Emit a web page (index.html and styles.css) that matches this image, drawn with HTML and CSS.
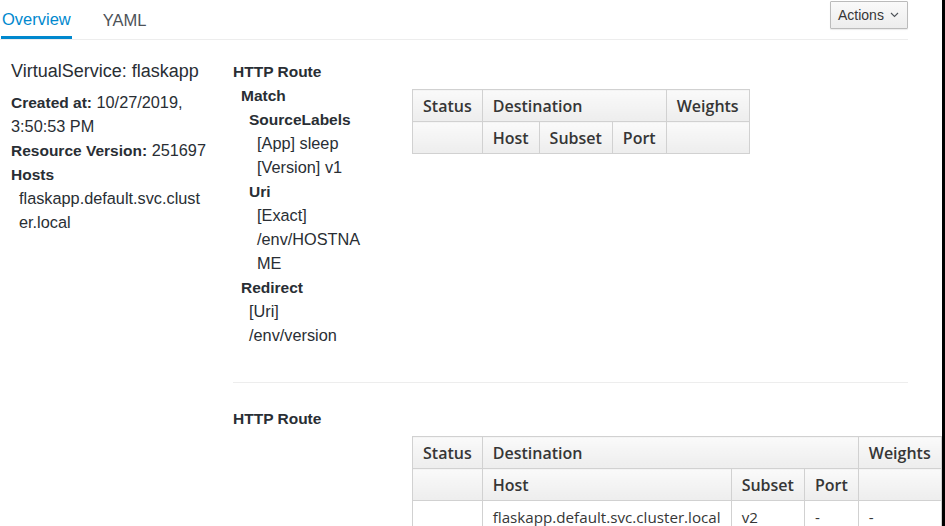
FILE: index.html
```html
<!DOCTYPE html>
<html lang="en">
<head>
<meta charset="utf-8">
<title>VirtualService: flaskapp</title>
<link rel="stylesheet" href="styles.css">
</head>
<body>
<div class="page">
  <div class="topbar">
    <ul class="tabs">
      <li class="tab active"><a href="#">Overview</a></li>
      <li class="tab"><a href="#">YAML</a></li>
    </ul>
    <button class="actions" type="button">Actions
      <svg class="caret" width="9" height="6" viewBox="0 0 9 6"><path d="M1 1l3.5 3.5L8 1" fill="none" stroke="#4d5258" stroke-width="1.1"/></svg>
    </button>
  </div>

  <div class="content">
    <aside class="meta">
      <h2 class="meta-title">VirtualService: flaskapp</h2>
      <div class="meta-line"><strong>Created at:</strong> 10/27/2019, 3:50:53 PM</div>
      <div class="meta-line nowrap"><strong>Resource Version:</strong> 251697</div>
      <div class="meta-line"><strong>Hosts</strong></div>
      <div class="meta-hosts">flaskapp.default.svc.cluster.local</div>
    </aside>

    <main class="routes">
      <section class="route">
        <h3 class="route-title">HTTP Route</h3>
        <div class="route-body">
          <div class="route-info">
            <div class="lvl1 b">Match</div>
            <div class="lvl2 b">SourceLabels</div>
            <div class="lvl3">[App] sleep</div>
            <div class="lvl3">[Version] v1</div>
            <div class="lvl2 b">Uri</div>
            <div class="lvl3">[Exact]</div>
            <div class="lvl3 brk">/env/HOSTNAME</div>
            <div class="lvl1 b">Redirect</div>
            <div class="lvl2">[Uri]</div>
            <div class="lvl2">/env/version</div>
          </div>
          <table class="dest">
            <thead>
              <tr>
                <th>Status</th>
                <th colspan="3">Destination</th>
                <th>Weights</th>
              </tr>
              <tr>
                <th></th>
                <th>Host</th>
                <th>Subset</th>
                <th>Port</th>
                <th></th>
              </tr>
            </thead>
          </table>
        </div>
      </section>

      <hr class="sep">

      <section class="route">
        <h3 class="route-title">HTTP Route</h3>
        <div class="route-body">
          <div class="route-info"></div>
          <table class="dest">
            <thead>
              <tr>
                <th>Status</th>
                <th colspan="3">Destination</th>
                <th>Weights</th>
              </tr>
              <tr>
                <th></th>
                <th>Host</th>
                <th>Subset</th>
                <th>Port</th>
                <th></th>
              </tr>
            </thead>
            <tbody>
              <tr>
                <td></td>
                <td>flaskapp.default.svc.cluster.local</td>
                <td>v2</td>
                <td>-</td>
                <td>-</td>
              </tr>
            </tbody>
          </table>
        </div>
      </section>
    </main>
  </div>
</div>
</body>
</html>
```

FILE: styles.css
```css
* { box-sizing: border-box; }

html, body {
  margin: 0;
  padding: 0;
  background: #000;
  height: 100%;
  overflow: hidden;
}

.page {
  width: 942px;
  height: 526px;
  background: #fff;
  overflow: hidden;
  font-family: "Liberation Sans", Arial, sans-serif;
  font-size: 16.3px;
  color: #292e34;
  padding-right: 34px;
}

strong {
  font-weight: bold;
  font-size: 15.5px;
  line-height: 1;
}

.topbar {
  display: flex;
  justify-content: space-between;
  align-items: flex-start;
  height: 40px;
  border-bottom: 1px solid #ededed;
}

.tabs {
  list-style: none;
  margin: 0;
  padding: 0 0 0 1px;
  display: flex;
  gap: 30px;
  height: 39px;
}

.tab a {
  display: block;
  height: 39px;
  line-height: 40px;
  padding: 0 1px;
  font-size: 16.5px;
  color: #4d5258;
  text-decoration: none;
}

.tab.active a {
  color: #0088ce;
  border-bottom: 3px solid #0088ce;
  line-height: 38px;
}

.actions {
  margin-top: 1px;
  height: 28px;
  width: 78px;
  padding: 0 0 0 7px;
  border: 1px solid #bbb;
  border-radius: 1px;
  background: linear-gradient(#fafafa, #ededed);
  font-family: inherit;
  font-size: 14px;
  color: #363636;
  display: flex;
  align-items: center;
  gap: 6px;
  box-shadow: 0 1px 1px rgba(3,3,3,.08);
}

.content {
  display: flex;
  padding-top: 19px;
}

.meta {
  width: 233px;
  padding: 0 30px 0 11px;
  line-height: 24px;
}

.meta-title {
  margin: 0 0 7px;
  font-size: 18px;
  font-weight: normal;
  line-height: 24px;
  white-space: nowrap;
}

.nowrap { white-space: nowrap; }

.meta-hosts {
  padding-left: 8px;
  word-break: break-all;
}

.routes {
  flex: 1;
  min-width: 0;
}

.route-title {
  margin: 0;
  padding-top: 2px;
  font-size: 15.5px;
  font-weight: bold;
  line-height: 22px;
}

.route-body {
  display: flex;
  align-items: flex-start;
  gap: 44px;
}

.route-info {
  width: 135px;
  flex: none;
  line-height: 24px;
}

.b {
  font-weight: bold;
  font-size: 15.5px;
  padding-top: 2px;
  line-height: 22px;
}

.lvl1 { padding-left: 8px; }
.lvl2 { padding-left: 16px; }
.lvl3 { padding-left: 24px; }
.brk { word-break: break-all; }

.dest {
  margin-top: 6px;
  border-collapse: collapse;
  font-family: "Open Sans", sans-serif;
  font-size: 15.2px;
  color: #363636;
  white-space: nowrap;
  flex: none;
}

.dest th,
.dest td {
  border: 1px solid #d1d1d1;
  height: 32px;
  padding: 0 10px;
  text-align: left;
}

.dest th {
  font-weight: 600;
  font-size: 16px;
  background: linear-gradient(#fafafa, #ededed);
}

.dest td {
  font-weight: normal;
}

.sep {
  border: 0;
  border-top: 1px solid #ededed;
  margin: 35px 0 23px;
}
```
